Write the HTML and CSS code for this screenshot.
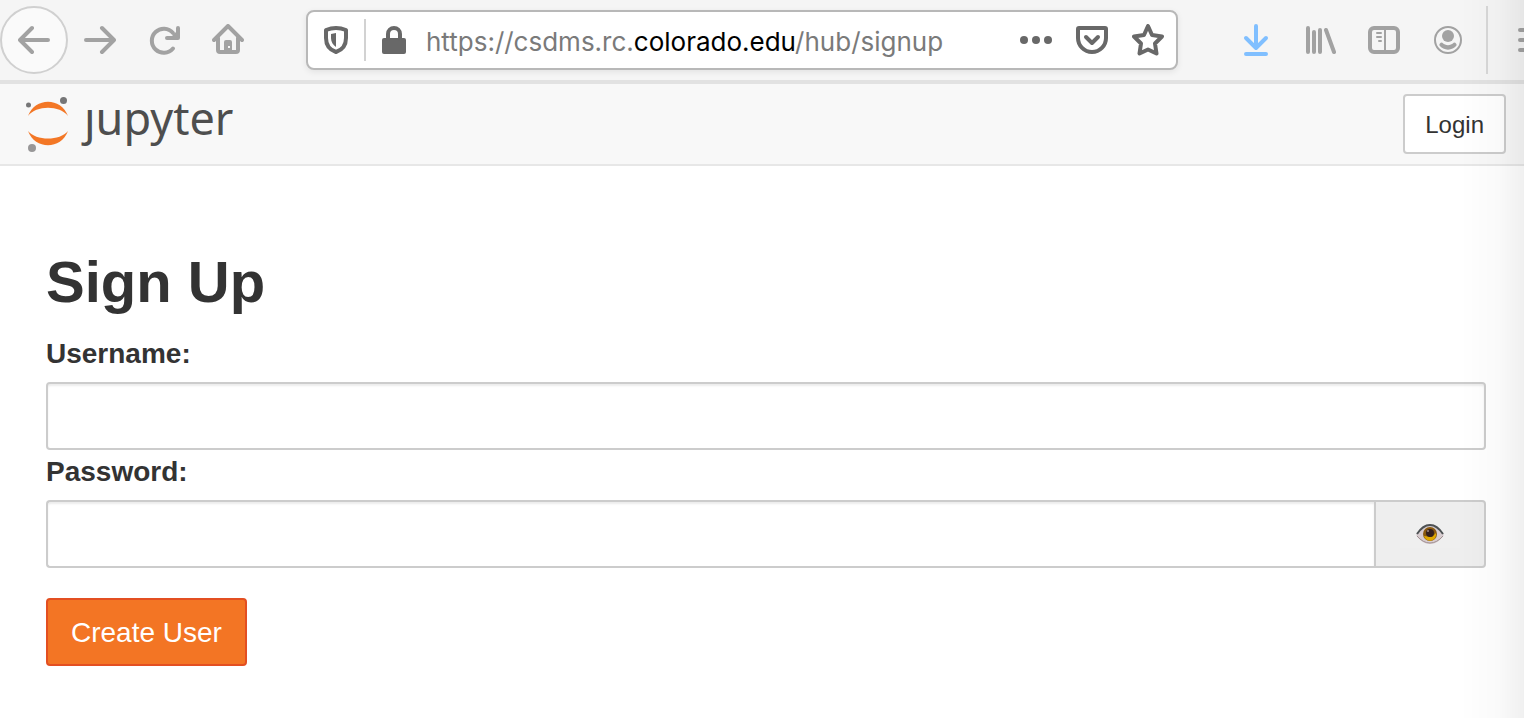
FILE: index.html
```html
<!DOCTYPE html>
<html lang="en">
  <head>
    <meta charset="UTF-8" />
    <meta name="viewport" content="width=device-width, initial-scale=1.0" />
    <title>JupyterHub</title>
    <link rel="stylesheet" href="styles.css">
  </head>
  <body>
    <div class="toolbar">
      <button class="tool back" aria-label="Back">
        <svg class="icon" viewBox="0 0 32 32"><path class="line" d="M30 16H3M14 4L2 16l12 12" /></svg>
      </button>
      <button class="tool" aria-label="Forward">
        <svg class="icon" viewBox="0 0 32 32"><path class="line" d="M2 16h27M18 4l12 12-12 12" /></svg>
      </button>
      <button class="tool" aria-label="Reload">
        <svg class="icon" viewBox="0 0 32 32">
          <path class="line" d="M25 24.500A12 12 0 1 1 25 9M30 4v10H19" />
          <path d="M30 6v9H21z" />
        </svg>
      </button>
      <button class="tool" aria-label="Home">
        <svg class="icon" viewBox="0 0 32 32">
          <path class="line" d="M2 16L16 2l14 14" />
          <path class="line" d="M6 14v12q0 2 2 2h16q2 0 2-2V14" />
          <path fill-rule="evenodd" d="M12 28V18q0-2 2-2h4q2 0 2 2v10zM16 22v2h2v-2z" />
        </svg>
      </button>

      <div class="urlbar">
        <button class="shield" aria-label="Tracking protection">
          <svg class="icon" viewBox="0 0 32 32">
            <path class="line" d="M16 4Q11 4 6 6v8c0 7 4 12 10 14 6-2 10-7 10-14V6Q21 4 16 4z" />
            <path d="M16 9v14c-3-2-5-5-5-9V10z" />
          </svg>
        </button>
        <button class="lock" aria-label="Connection secure">
          <svg class="icon" viewBox="0 0 32 32">
            <rect x="4" y="14" width="24" height="16" rx="2" />
            <path class="line" d="M10 15v-5a6 6 0 0 1 12 0v5" />
          </svg>
        </button>
        <div class="url">https://csdms.rc.<span class="domain">colorado.edu</span>/hub/signup</div>
        <div class="page-actions">
          <button aria-label="Page actions">
            <svg class="icon" viewBox="0 0 32 32"><circle cx="4" cy="16" r="4" /><circle cx="16" cy="16" r="4" /><circle cx="28" cy="16" r="4" /></svg>
          </button>
          <button aria-label="Save to Pocket">
            <svg class="icon" viewBox="0 0 32 32">
              <path class="line" d="M3 4h26q1 0 1 1v9a14 14 0 0 1-28 0V5q0-1 1-1z" />
              <path class="line" d="M10 13l6 6 6-6" />
            </svg>
          </button>
          <button aria-label="Bookmark">
            <svg class="icon" viewBox="0 0 32 32"><path class="line" d="M16 2l4 9 10 1.500-7 7 1.500 10-8.500-4-8.500 4 1.500-10-7-7 10-1.500z" /></svg>
          </button>
        </div>
      </div>

      <button class="tool download" aria-label="Downloads">
        <svg class="icon" viewBox="0 0 32 32"><path class="line" d="M16 2v22M6 14l10 10 10-10M6 30h20" /></svg>
      </button>
      <button class="tool" aria-label="Library">
        <svg class="icon" viewBox="0 0 32 32"><path class="line" d="M4 4v24M10 8v20M16 6v22M22 6l8 22" /></svg>
      </button>
      <button class="tool" aria-label="Sidebars">
        <svg class="icon" viewBox="0 0 32 32">
          <rect class="line" x="2" y="4" width="28" height="24" rx="4" />
          <path class="thin" d="M17 4v24M9 9h4M9 13h4M11 17h2" />
        </svg>
      </button>
      <button class="tool" aria-label="Account">
        <svg class="icon" viewBox="0 0 32 32">
          <circle class="thin" cx="16" cy="16" r="13" />
          <circle cx="16" cy="12" r="6" />
          <path d="M10 18.500c4 3.500 8 3.500 12 0 2 0 3 2 2.500 3-4 5.500-13 5.500-17 0-.5-1 .5-3 2.500-3z" />
        </svg>
      </button>
      <button class="menu" aria-label="Open menu">
        <svg class="icon" viewBox="0 0 32 32"><path class="line" d="M2 6h28M2 16h28M2 26h28" /></svg>
      </button>
    </div>

    <header class="header">
      <a class="logo" href="#" aria-label="jupyter">
        <svg class="planet" viewBox="0 0 44 58">
          <path class="ring" d="M2 21C9 2 35 2 42 21 34 10 10 10 2 21z" />
          <path class="ring" d="M2 36C9 55 35 55 42 36 34 46 10 46 2 36z" />
          <circle cx="2.500" cy="10" r="2.500" fill="#767677" />
          <circle cx="37.500" cy="5.500" r="3.500" fill="#767677" />
          <circle cx="6" cy="53" r="4" fill="#989798" />
        </svg>
        <span>ȷupyter</span>
      </a>
      <a class="login" href="#">Login</a>
    </header>

    <main>
      <form>
        <h1>Sign Up</h1>
        <label for="username">Username:</label>
        <input type="text" id="username" class="field" />
        <label for="password">Password:</label>
        <div class="input-group">
          <input type="password" id="password" class="field" />
          <span class="addon">
            <button type="button" class="eye" aria-label="Show password">
              <svg viewBox="0 0 28 22">
                <path d="M0 12Q6 1 14 1t14 11Q22 21 14 21T0 12z" fill="#d8cdd0" />
                <path d="M1 11Q7 2 14 2t13 9" fill="none" stroke="#4d5254" stroke-width="2" />
                <path d="M1 13Q7 20 14 20t13-7" fill="none" stroke="#a08f91" />
                <circle cx="14" cy="11" r="7" fill="#8a5a10" />
                <path d="M8 13a6 6 0 0 0 12-3l-4 4z" fill="#e0a800" />
                <circle cx="14" cy="10" r="4" fill="#35211d" />
                <circle cx="12" cy="8" r="1" fill="#a28b82" />
              </svg>
            </button>
          </span>
        </div>
        <button type="submit" class="create">Create User</button>
      </form>
    </main>

    <script>
      const password = document.getElementById("password");

      document.querySelector(".eye").addEventListener("click", () => {
        password.type = password.type === "password" ? "text" : "password";
      });
    </script>
  </body>
</html>
```
FILE: styles.css
```css
* {
  box-sizing: border-box;
}

body {
  margin: 0;
  background: #fff;
  color: #333;
  font-family: "Liberation Sans", Arial, sans-serif;
  font-size: 28px;
}

/* window shade along the right side */
body::after {
  content: "";
  position: fixed;
  top: 0;
  right: 0;
  bottom: 0;
  width: 64px;
  background: linear-gradient(to right, transparent, rgba(0, 0, 0, 0.02) 60%, rgba(0, 0, 0, 0.06));
  pointer-events: none;
}

button {
  padding: 0;
  border: none;
  background: none;
  color: inherit;
  font: inherit;
  cursor: pointer;
}

/* Browser toolbar */
.toolbar {
  display: flex;
  align-items: center;
  height: 84px;
  overflow: hidden;
  background: #f5f5f5;
  border-bottom: 4px solid #e2e2e2;
  color: #a2a2a2;
}

.icon {
  display: block;
  width: 32px;
  height: 32px;
  fill: currentColor;
}

.line,
.thin {
  fill: none;
  stroke: currentColor;
  stroke-width: 4;
  stroke-linecap: round;
  stroke-linejoin: round;
}

.thin {
  stroke-width: 2;
}

.tool {
  display: flex;
  flex: none;
  align-items: center;
  justify-content: center;
  width: 64px;
  height: 68px;
}

.back {
  width: 68px;
  border: 2px solid #d0d0d0;
  border-radius: 50%;
  background: #fafafa;
}

.download {
  color: #80bfff;
}

.menu {
  flex: none;
  width: 38px;
  height: 68px;
  margin-left: 6px;
  padding-left: 30px;
  border-left: 2px solid #d8d8d8;
}

.urlbar {
  display: flex;
  flex: 1;
  align-items: center;
  min-width: 0;
  height: 60px;
  margin: 0 46px;
  padding: 0 12px;
  border: 2px solid #b8b8b8;
  border-radius: 8px;
  background: #fff;
  box-shadow: 0 2px 6px rgba(0, 0, 0, 0.08);
  color: #686868;
}

.shield {
  padding: 5px 12px 5px 0;
  border-right: 2px solid #d2d2d2;
}

.lock {
  margin: 0 16px 0 12px;
}

.url {
  flex: 1;
  min-width: 0;
  overflow: hidden;
  padding-top: 2px;
  color: #7a7a7a;
  font-family: Inter, sans-serif;
  font-size: 26px;
  white-space: nowrap;
}

.domain {
  color: #000;
}

.page-actions {
  display: flex;
  gap: 24px;
}

/* JupyterHub header */
.header {
  display: flex;
  align-items: center;
  justify-content: space-between;
  height: 82px;
  padding: 0 18px 0 26px;
  background: #f8f8f8;
  border-bottom: 2px solid #e7e7e7;
}

.logo {
  display: flex;
  align-items: center;
  gap: 14px;
  color: #4e4e4e;
  font-family: "Noto Sans", sans-serif;
  font-size: 45px;
  line-height: 56px;
  text-decoration: none;
}

.logo span {
  padding-bottom: 12px;
}

.planet {
  width: 44px;
  height: 58px;
}

.ring {
  fill: #f37726;
}

.login {
  padding: 1px 20px 0;
  border: 2px solid #ccc;
  border-radius: 4px;
  background: #fff;
  color: #333;
  font-size: 24px;
  line-height: 55px;
  text-decoration: none;
}

/* Sign up form */
main {
  padding: 84px 38px 52px 46px;
}

h1 {
  margin: 0 0 18px;
  font-size: 58px;
  line-height: 64px;
}

label {
  display: block;
  margin-bottom: 6px;
  font-weight: bold;
  line-height: 44px;
}

.field {
  display: block;
  width: 100%;
  height: 68px;
  padding: 12px 24px;
  border: 2px solid #ccc;
  border-radius: 4px;
  background: #fff;
  box-shadow: inset 0 2px 2px rgba(0, 0, 0, 0.08);
  color: #555;
  font: inherit;
}

.input-group {
  display: flex;
}

.input-group .field {
  flex: 1;
  border-right: none;
  border-radius: 4px 0 0 4px;
}

.addon {
  display: flex;
  align-items: center;
  padding: 0 24px;
  border: 2px solid #ccc;
  border-radius: 0 4px 4px 0;
  background: #eee;
}

.eye {
  width: 60px;
  height: 28px;
  background: #efefef;
}

.eye svg {
  display: block;
  width: 28px;
  height: 22px;
  margin: 0 auto;
}

.create {
  height: 68px;
  margin-top: 30px;
  padding: 2px 23px 0;
  border: 2px solid #e34f21;
  border-radius: 4px;
  background: #f37524;
  color: #fff;
}
```
